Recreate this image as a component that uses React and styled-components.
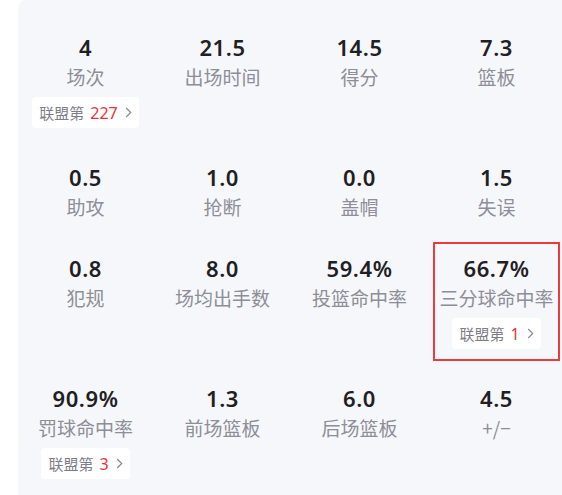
import React from 'react'
import styled, { createGlobalStyle } from 'styled-components'

const stats = [
  { value: '4', label: '场次', rank: '227' },
  { value: '21.5', label: '出场时间' },
  { value: '14.5', label: '得分' },
  { value: '7.3', label: '篮板' },
  { value: '0.5', label: '助攻' },
  { value: '1.0', label: '抢断' },
  { value: '0.0', label: '盖帽' },
  { value: '1.5', label: '失误' },
  { value: '0.8', label: '犯规' },
  { value: '8.0', label: '场均出手数' },
  { value: '59.4%', label: '投篮命中率' },
  { value: '66.7%', label: '三分球命中率', rank: '1', active: true },
  { value: '90.9%', label: '罚球命中率', rank: '3' },
  { value: '1.3', label: '前场篮板' },
  { value: '6.0', label: '后场篮板' },
  { value: '4.5', label: '+/−' }
]

const Chevron = () => (
  <svg width='7' height='11' viewBox='0 0 7 11' fill='none'>
    <path d='M1.2 1l4.5 4.5L1.2 10' stroke='#8b8c96' strokeWidth='1.2' />
  </svg>
)

const App = () => {
  return (
    <>
      <GlobalStyle />
      <Panel>
        <Grid>
          {stats.map((s, i) => (
            <Cell key={i} $active={s.active}>
              <Value>{s.value}</Value>
              <Label>{s.label}</Label>
              {s.rank && (
                <Rank>
                  联盟第<em>{s.rank}</em>
                  <Chevron />
                </Rank>
              )}
            </Cell>
          ))}
        </Grid>
      </Panel>
    </>
  )
}

const GlobalStyle = createGlobalStyle`
  html, body {
    margin: 0;
    overflow: hidden;
    background: #fff;
  }
  body {
    font-family: "Noto Sans", "Noto Sans CJK SC", sans-serif;
  }
`

const Panel = styled.div`
  margin-left: 18px;
  width: 556px;
  padding: 22px 0 20px 5px;
  box-sizing: border-box;
  background: #f6f7fa;
  border-radius: 8px 8px 0 0;
`

const Grid = styled.div`
  display: grid;
  grid-template-columns: repeat(4, 125px);
  column-gap: 12px;
  row-gap: 13px;
`

const Cell = styled.div`
  display: flex;
  flex-direction: column;
  align-items: center;
  padding: 10px 0 11px;
  outline: ${p => (p.$active ? '2px solid #f0393b' : 'none')};
  outline-offset: -1px;
`

const Value = styled.div`
  font-family: "Noto Sans", sans-serif;
  font-weight: 600;
  font-size: 22px;
  line-height: 30px;
  color: #1f2024;
  letter-spacing: 0.6px;
`

const Label = styled.div`
  margin-top: 3px;
  font-family: "Noto Sans CJK SC", sans-serif;
  font-size: 19px;
  line-height: 24px;
  color: #8d8e98;
  white-space: nowrap;
`

const Rank = styled.div`
  margin-top: 8px;
  height: 31px;
  display: flex;
  align-items: center;
  gap: 7px;
  padding: 0 7px;
  background: #fff;
  border-radius: 4px;
  font-family: "Noto Sans CJK SC", sans-serif;
  font-size: 15px;
  color: #7d7e88;
  em {
    font-style: normal;
    font-family: "Noto Sans", sans-serif;
    font-size: 16px;
    color: #e8323a;
    margin-left: -1px;
  }
`

export default App
